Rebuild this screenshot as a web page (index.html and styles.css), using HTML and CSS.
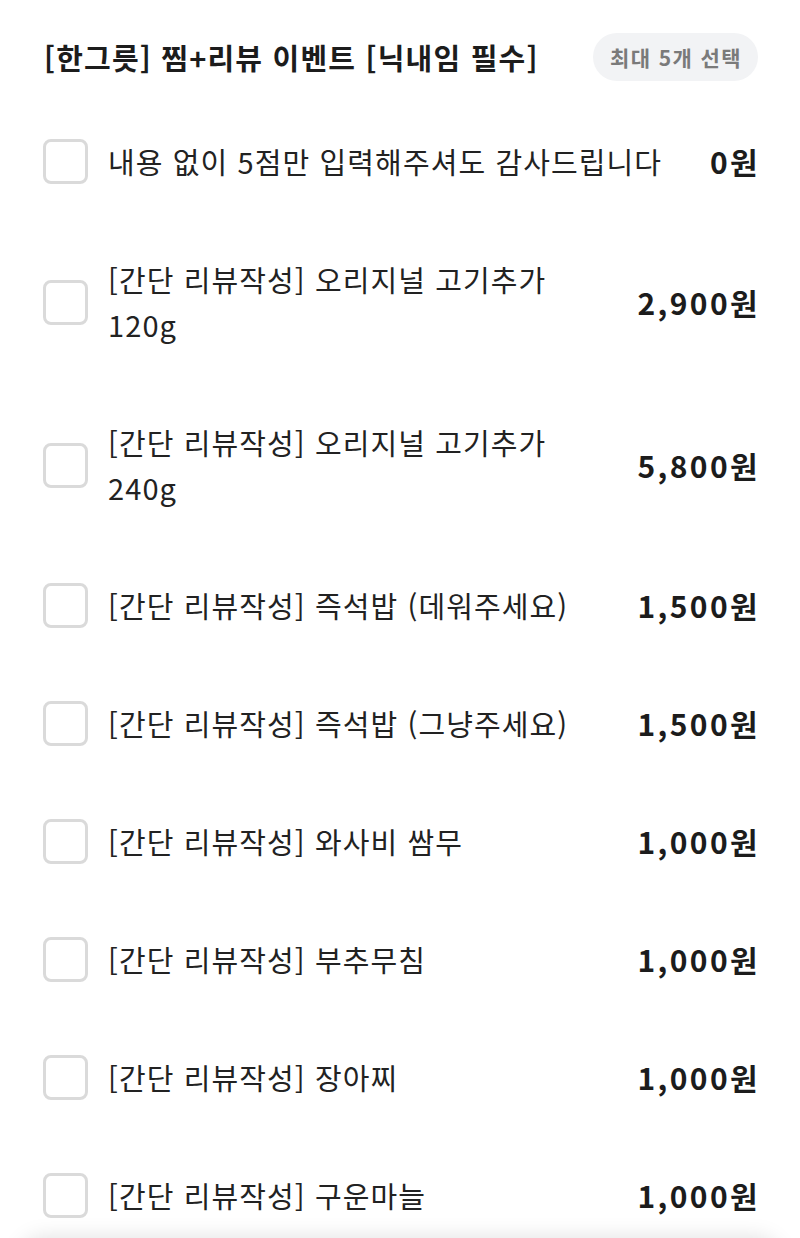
FILE: index.html
```html
<!DOCTYPE html>
<html lang="ko">
<head>
<meta charset="utf-8">
<link rel="stylesheet" href="styles.css">
</head>
<body>
<div class="page">
  <header class="head">
    <h1 class="title">[한그릇] 찜+리뷰 이벤트 [닉내임 필수]</h1>
    <span class="pill">최대 5개 선택</span>
  </header>
  <ul class="list">
    <li class="row"><span class="box"></span><span class="name">내용 없이 5점만 입력해주셔도 감사드립니다</span><span class="price">0원</span></li>
    <li class="row"><span class="box"></span><span class="name">[간단 리뷰작성] 오리지널 고기추가 120g</span><span class="price">2,900원</span></li>
    <li class="row"><span class="box"></span><span class="name">[간단 리뷰작성] 오리지널 고기추가 240g</span><span class="price">5,800원</span></li>
    <li class="row"><span class="box"></span><span class="name">[간단 리뷰작성] 즉석밥 (데워주세요)</span><span class="price">1,500원</span></li>
    <li class="row"><span class="box"></span><span class="name">[간단 리뷰작성] 즉석밥 (그냥주세요)</span><span class="price">1,500원</span></li>
    <li class="row"><span class="box"></span><span class="name">[간단 리뷰작성] 와사비 쌈무</span><span class="price">1,000원</span></li>
    <li class="row"><span class="box"></span><span class="name">[간단 리뷰작성] 부추무침</span><span class="price">1,000원</span></li>
    <li class="row"><span class="box"></span><span class="name">[간단 리뷰작성] 장아찌</span><span class="price">1,000원</span></li>
    <li class="row"><span class="box"></span><span class="name">[간단 리뷰작성] 구운마늘</span><span class="price">1,000원</span></li>
  </ul>
</div>
<div class="sheet"></div>
</body>
</html>
```
FILE: styles.css
```css
html, body {
  margin: 0;
  padding: 0;
  background: #ffffff;
  overflow: hidden;
}
body {
  width: 800px;
  height: 1238px;
  position: relative;
  font-family: "Noto Sans CJK KR", "Noto Sans", sans-serif;
  color: #1f1f1f;
}
.page {
  padding: 32px 42px 0 43px;
}
.head {
  display: flex;
  align-items: center;
  justify-content: space-between;
  height: 50px;
}
.title {
  margin: 0;
  font-size: 29px;
  font-weight: 700;
  letter-spacing: 1.2px;
  color: #1c1c1c;
  padding-left: 1px;
}
.pill {
  background: #f2f3f5;
  color: #7a7a7a;
  font-size: 21px;
  font-weight: 700;
  letter-spacing: 1.4px;
  border-radius: 24px;
  height: 48px;
  padding: 0 16px 0 17px;
  display: flex;
  align-items: center;
}
.list {
  list-style: none;
  margin: 20.5px 0 0;
  padding: 0;
}
.row {
  display: flex;
  align-items: center;
  padding: 36.5px 0;
  gap: 20px;
}
.box {
  flex: none;
  width: 39px;
  height: 39px;
  border: 3px solid #dadada;
  border-radius: 8px;
}
.name {
  flex: 1;
  min-width: 0;
  font-size: 29px;
  line-height: 45px;
  color: #222;
  letter-spacing: 1.1px;
  word-break: keep-all;
}
.price {
  flex: none;
  margin-left: 20px;
  font-size: 30px;
  font-weight: 700;
  color: #1c1c1c;
  line-height: 45px;
  letter-spacing: 2.4px;
  margin-right: -2px;
}
.sheet {
  position: absolute;
  left: 20px;
  right: 20px;
  top: 1242px;
  height: 60px;
  background: #fff;
  border-radius: 24px 24px 0 0;
  box-shadow: 0 -4px 22px rgba(0,0,0,0.13);
}
```
